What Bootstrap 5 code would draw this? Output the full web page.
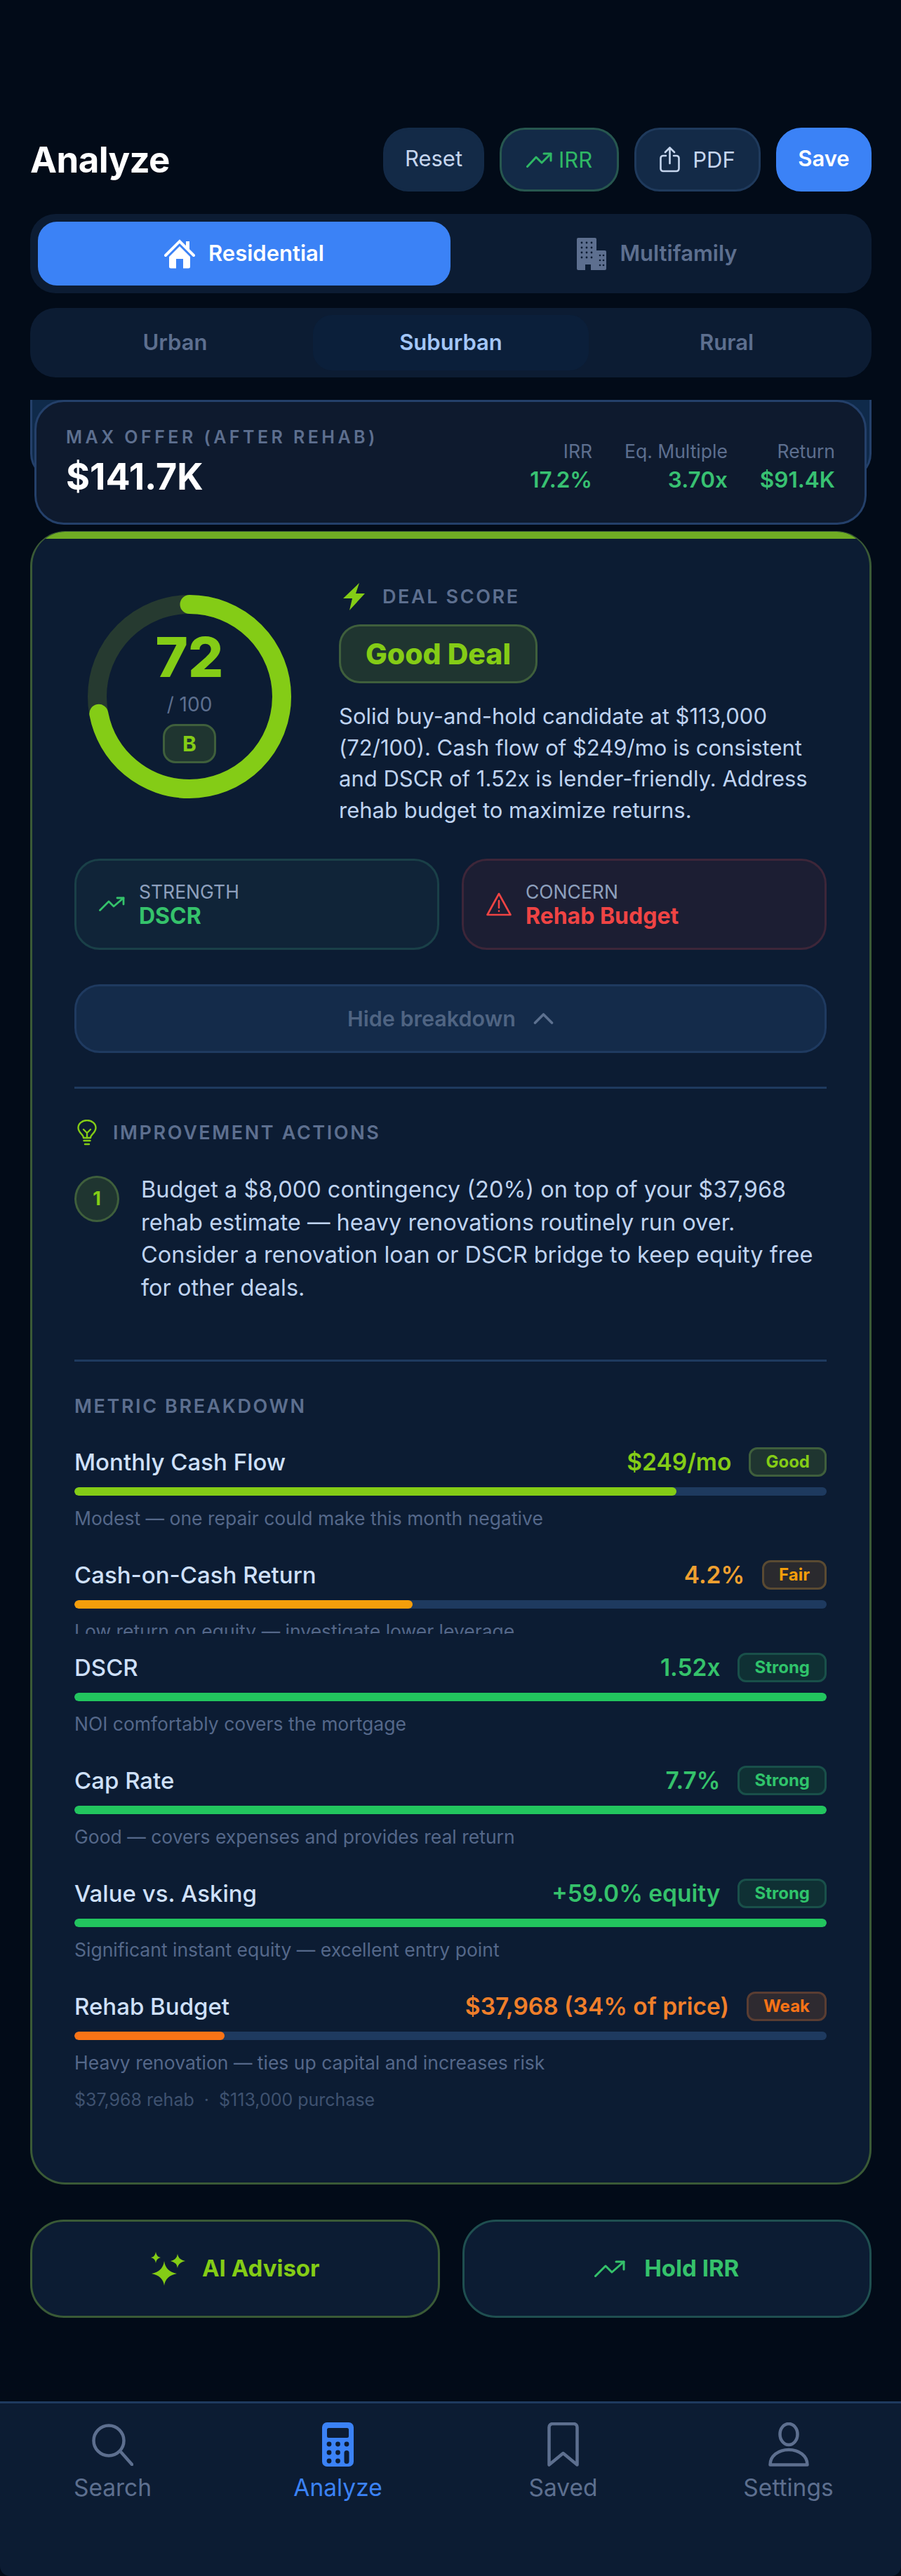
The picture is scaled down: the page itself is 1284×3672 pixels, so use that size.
<!DOCTYPE html>
<html lang="en">
<head>
<meta charset="utf-8">
<title>Analyze</title>
<link href="https://cdn.jsdelivr.net/npm/bootstrap@5.3.0/dist/css/bootstrap.min.css" rel="stylesheet">
<style>
html,body{background:#020b18;}
body{font-family:Inter,"Noto Sans",sans-serif;color:#cfe0fa;margin:0;}
.screen{height:3672px;width:1284px;overflow:hidden;}
.top-head{margin:182px 42px 0 43px;height:91px;}
.page-title{font-size:51px;font-weight:700;color:#fff;margin:0;line-height:1;letter-spacing:-.6px;}
.head-btns{gap:22px;}
.hb{height:91px;border-radius:36px;font-size:31px;font-weight:400;line-height:1;background:#132a47;border:3px solid #132a47;color:#c6d6ee;display:flex;align-items:center;justify-content:center;gap:9px;padding:0;}
.hb-reset,.hb-save{padding-bottom:4px;}
.hb-reset{width:144px;}
.hb-irr{width:170px;border-color:#27574f;color:#2fb865;}
.hb-pdf{width:180px;border-color:#1f3a5c;gap:18px;}
.hb-save{width:136px;background:#3b82f6;border-color:#3b82f6;color:#fff;font-weight:600;}
.seg{background:#0c1c33;border-radius:36px;margin:0 42px 0 43px;}
.seg-a{margin-top:32px;padding:11px;height:113px;}
.seg-b{margin-top:21px;padding:10px;height:99px;}
.seg-item{flex:1 1 0;display:flex;align-items:center;justify-content:center;color:#5d6f8f;font-size:31px;font-weight:600;gap:19px;border-radius:27px;}
.seg-a .seg-item:first-child{flex:0 0 588px;}
.seg-item.on-blue{background:#3b82f6;color:#fff;}
.seg-item.on-dark{background:#0b1f3a;color:#a3c6f7;}
.offer-wrap{margin:32px 42px 0 43px;}
.offer-back{position:absolute;left:0;right:0;top:0;height:113px;background:#0f2a4a;border:3px solid #24406a;border-top:0;border-radius:0 0 36px 36px;}
.offer-card{margin:0 7px 0 6px;height:178px;background:#0e1a2e;border:3px solid #24406a;border-radius:42px;padding:0 42px 0 42px;flex-direction:row;align-items:center;justify-content:space-between;color:#fff;}
.offer-label{font-size:25px;font-weight:600;letter-spacing:4.45px;color:#5d6f8f;line-height:30px;margin-bottom:12px;}
.offer-value{font-size:52px;font-weight:700;line-height:60px;color:#fff;}
.offer-stats{gap:46px;text-align:right;padding-top:12px;}
.stat-l{font-size:26.5px;color:#5d6f8f;line-height:32px;margin-bottom:6px;}
.stat-v{font-size:31.5px;font-weight:600;color:#38c172;line-height:38px;}
.deal-card{margin:9px 42px 0 43px;height:2357px;background:#0c1c33;border:3px solid #3a5a36;border-top-width:1px;border-radius:50px;overflow:hidden;}
.deal-stripe{height:10px;background:#6fac24;}
.deal-body{padding:63px 61px 0 60px;}
.ring-box{width:290px;height:290px;margin:17px 68px 0 19px;flex:none;}
.ring-inner{position:absolute;inset:0;display:flex;flex-direction:column;align-items:center;}
.ring-num{font-size:79px;font-weight:800;line-height:78px;color:#84cc16;margin-top:49px;}
.ring-of{font-size:28px;color:#5d6f8f;line-height:34px;margin-top:12px;}
.ring-grade{width:76px;height:56px;margin-top:11px;border-radius:18px;background:#1f3530;border:3px solid #3f5f3c;color:#84cc16;font-size:30px;font-weight:700;display:flex;align-items:center;justify-content:center;}
.deal-right{flex:1;min-width:0;}
.eyebrow{font-size:27px;font-weight:600;letter-spacing:2.6px;color:#5d6f8f;line-height:33px;}
.deal-eye{height:39px;gap:25px;padding-left:6px;}
.verdict{display:inline-block;margin-top:20px;height:84px;width:283px;line-height:78px;text-align:center;border-radius:30px;background:#1f3530;border:3px solid #3f5f3c;color:#84cc16;font-size:41px;font-weight:800;padding:0;}
.summary{margin:25px 0 0 0;font-size:31px;line-height:44.7px;color:#bfd3f0;}
.sc-row{margin-top:46px;gap:32px;}
.sc{flex:1 1 0;height:130px;border-radius:36px;border:3px solid;display:flex;flex-direction:row;align-items:center;padding:0 0 0 32px;gap:20px;}
.sc-good{background:#102438;border-color:#1a4048;}
.sc-bad{background:#1c1e33;border-color:#3d2639;}
.sc-l{font-size:26.5px;line-height:32px;color:#8ea0bd;margin-top:2px;}
.sc-v{font-size:32px;font-weight:700;line-height:38px;}
.toggle-btn{display:flex;align-items:center;justify-content:center;gap:25px;width:100%;height:98px;margin-top:49px;border-radius:36px;background:#142b4a;border:3px solid #1f3a60;color:#4f6482;font-size:30.5px;font-weight:600;padding:0;}
.rule{height:3px;background:#1e3a5f;opacity:1;border:0;margin:0;}
.rule-a{margin-top:48px;}
.imp-head{margin-top:44px;gap:23px;height:37px;padding-left:4px;}
.act{margin-top:40px;gap:31px;}
.act-num{flex:none;width:64px;height:66px;margin-top:3px;border-radius:50%;background:#1f3530;border:3px solid #3f5f3c;color:#84cc16;font-size:27px;font-weight:700;display:flex;align-items:center;justify-content:center;}
.act-text{margin:0;font-size:32.5px;line-height:46.8px;color:#bfd3f0;}
.rule-b{margin-top:78px;}
.mb-head{margin-top:47px;}
.metric{margin-top:42px;}
.m-top{height:42px;gap:25px;}
.m-name{font-size:33px;font-weight:500;color:#cfe0fa;margin-right:auto;line-height:42px;}
.m-val{font-size:33.5px;font-weight:600;line-height:42px;}
.m-pill{height:42px;border-radius:12px;border:3px solid;font-size:24px;font-weight:700;padding:0 21px;display:inline-flex;align-items:center;line-height:1;}
.p-good{background:#1f3530;border-color:#3f5f3c;color:#84cc16;}
.p-fair{background:#2a2a2e;border-color:#5a4a32;color:#f59e0b;}
.p-strong{background:#0f3034;border-color:#19504a;color:#2fc36b;}
.p-weak{background:#2e2a30;border-color:#5a3d32;color:#f97316;}
.c-good{color:#84cc16;}.c-fair{color:#f0a030;}.c-strong{color:#35c26b;}.c-weak{color:#f07f2a;}
.m-track{height:12px;margin-top:15px;border-radius:6px;background:#1e3a5f;}
.b-good{background:#84cc16;}.b-fair{background:#f59e0b;}.b-strong{background:#22c55e;}.b-weak{background:#f97316;}
.m-bar{border-radius:6px;}
.m-hint{font-size:26.5px;line-height:36px;color:#55688a;margin-top:14px;}
.m-clip{height:22px;overflow:hidden;}
.metric-tight{margin-bottom:-15px;}
.m-sub{font-size:25px;line-height:34px;color:#3f5270;margin-top:18px;}
.cta-row{margin:50px 42px 0 43px;gap:32px;}
.cta{flex:1 1 0;height:140px;border-radius:48px;background:#0c1c33;border:3px solid;font-size:33px;font-weight:700;display:flex;align-items:center;justify-content:center;gap:23px;padding:0;}
.cta-ai{border-color:#3a5a36;color:#84cc16;}
.cta-irr{border-color:#1f4f50;color:#35c26b;gap:27px;}
.tabbar{margin-top:auto;height:249px;background:#0c1c33;border-top:3px solid #1e3a5f;border-radius:0 0 14px 14px;padding-top:26px;flex-wrap:nowrap;}
.tab{flex:1 1 0;display:flex;flex-direction:column;align-items:center;color:#5d6f8f;font-size:33.5px;line-height:40px;padding:0;text-decoration:none;}
.tab-ic{height:64px;display:flex;align-items:center;justify-content:center;margin-bottom:10px;}
.tab.on{color:#3b82f6;}
svg{display:block;}
</style>
</head>
<body>
<div class="screen d-flex flex-column">

<header class="top-head d-flex justify-content-between align-items-center">
  <h1 class="page-title">Analyze</h1>
  <div class="head-btns d-flex">
    <button class="btn hb hb-reset" type="button">Reset</button>
    <button class="btn hb hb-irr" type="button"><svg width="37" height="22" viewBox="0 0 37 22" fill="none" stroke="#2fb865" stroke-width="3" stroke-linecap="round" stroke-linejoin="round"><path d="M1.5 20.5 14 7l8 8L35 2"/><path d="M25 2h10v10"/></svg>IRR</button>
    <button class="btn hb hb-pdf" type="button"><svg width="29" height="37" viewBox="0 0 29 37" fill="none" stroke="#c6d6ee" stroke-width="2.6" stroke-linecap="round" stroke-linejoin="round"><path d="M9 13H5a3.500 3.500 0 0 0-3.500 3.500v15A3.500 3.500 0 0 0 5 35h19a3.500 3.500 0 0 0 3.500-3.500v-15A3.500 3.500 0 0 0 24 13h-4"/><path d="M14.500 24V2M8 8l6.500-6.500L21 8"/></svg>PDF</button>
    <button class="btn hb hb-save" type="button">Save</button>
  </div>
</header>

<div class="seg seg-a d-flex">
  <div class="seg-item on-blue">
    <svg width="44" height="42" viewBox="0 0 44 42" fill="#fff"><path d="M31 3h5v12l-5-5z"/><path d="M2 23 22 3l20 20" fill="none" stroke="#fff" stroke-width="4" stroke-linecap="round"/><path d="M7 25 22 10l15 15v14a2.500 2.500 0 0 1-2.500 2.500H27V28H17v13.500H9.500A2.500 2.500 0 0 1 7 39z"/></svg>
    <span>Residential</span>
  </div>
  <div class="seg-item">
    <svg width="42" height="46" viewBox="0 0 42 46"><path fill="#5d6f8f" d="M2 0h24a2 2 0 0 1 2 2v44h-8v-8h-8v8H2a2 2 0 0 1-2-2V2a2 2 0 0 1 2-2z"/><path fill="#5d6f8f" d="M28 18h12a2 2 0 0 1 2 2v24a2 2 0 0 1-2 2H28z"/><g fill="#0c1c33"><circle cx="7" cy="7" r="1.400"/><circle cx="14" cy="7" r="1.400"/><circle cx="21" cy="7" r="1.400"/><circle cx="7" cy="14" r="1.400"/><circle cx="14" cy="14" r="1.400"/><circle cx="21" cy="14" r="1.400"/><circle cx="7" cy="21" r="1.400"/><circle cx="14" cy="21" r="1.400"/><circle cx="21" cy="21" r="1.400"/><circle cx="7" cy="28" r="1.400"/><circle cx="14" cy="28" r="1.400"/><circle cx="21" cy="28" r="1.400"/><circle cx="33" cy="25" r="1.300"/><circle cx="38" cy="25" r="1.300"/><circle cx="33" cy="32" r="1.300"/><circle cx="38" cy="32" r="1.300"/><circle cx="33" cy="39" r="1.300"/><circle cx="38" cy="39" r="1.300"/></g></svg>
    <span>Multifamily</span>
  </div>
</div>

<div class="seg seg-b d-flex">
  <div class="seg-item">Urban</div>
  <div class="seg-item on-dark">Suburban</div>
  <div class="seg-item">Rural</div>
</div>

<div class="offer-wrap position-relative">
  <div class="offer-back"></div>
  <div class="card offer-card position-relative">
    <div>
      <div class="offer-label">MAX OFFER (AFTER REHAB)</div>
      <div class="offer-value">$141.7K</div>
    </div>
    <div class="offer-stats d-flex">
      <div><div class="stat-l">IRR</div><div class="stat-v">17.2%</div></div>
      <div><div class="stat-l">Eq. Multiple</div><div class="stat-v">3.70x</div></div>
      <div><div class="stat-l">Return</div><div class="stat-v">$91.4K</div></div>
    </div>
  </div>
</div>

<section class="deal-card">
  <div class="deal-stripe"></div>
  <div class="deal-body">
    <div class="d-flex">
      <div class="ring-box position-relative">
        <svg width="290" height="290" viewBox="0 0 290 290" fill="none" stroke-width="27"><circle cx="145" cy="145" r="131.500" stroke="#263a30"/><circle cx="145" cy="145" r="131.500" stroke="#84cc16" stroke-linecap="round" stroke-dasharray="595 826.200" transform="rotate(-90 145 145)"/></svg>
        <div class="ring-inner">
          <div class="ring-num">72</div>
          <div class="ring-of">/ 100</div>
          <div class="ring-grade">B</div>
        </div>
      </div>
      <div class="deal-right">
        <div class="deal-eye d-flex align-items-center">
          <svg width="31" height="39" viewBox="0 0 31 39" fill="#84cc16"><path d="M23 0 0 22h13l-4 17 22-24H18z"/></svg>
          <span class="eyebrow">DEAL SCORE</span>
        </div>
        <div class="badge verdict">Good Deal</div>
        <p class="summary">Solid buy-and-hold candidate at $113,000 (72/100). Cash flow of $249/mo is consistent and DSCR of 1.52x is lender-friendly. Address rehab budget to maximize returns.</p>
      </div>
    </div>

    <div class="sc-row d-flex">
      <div class="card sc sc-good">
        <svg width="37" height="21" viewBox="0 0 37 21" fill="none" stroke="#35c26b" stroke-width="2.800" stroke-linecap="round" stroke-linejoin="round"><path d="M1.500 19.500 14 7l7 7L35 2"/><path d="M26 2h9v9"/></svg>
        <div><div class="sc-l">STRENGTH</div><div class="sc-v c-strong">DSCR</div></div>
      </div>
      <div class="card sc sc-bad">
        <svg width="36" height="34" viewBox="0 0 36 34" fill="none" stroke="#ef4444" stroke-width="2.600" stroke-linejoin="round" stroke-linecap="round"><path d="M18 2 34.500 32h-33z"/><path d="M18 12v10M18 26.500v.3"/></svg>
        <div><div class="sc-l">CONCERN</div><div class="sc-v" style="color:#ef4444">Rehab Budget</div></div>
      </div>
    </div>

    <button class="btn toggle-btn" type="button">Hide breakdown<svg width="29" height="16" viewBox="0 0 29 16" fill="none" stroke="#5d7190" stroke-width="3.600" stroke-linecap="round" stroke-linejoin="round"><path d="M2.500 14 14.500 2l12 12"/></svg></button>

    <hr class="rule rule-a">

    <div class="imp-head d-flex align-items-center">
      <svg width="28" height="37" viewBox="0 0 28 37" fill="none" stroke="#84cc16" stroke-width="2.400" stroke-linecap="round" stroke-linejoin="round"><path d="M9 26c0-5-7.500-7-7.500-14.500a12.500 10.500 0 0 1 25 0C26.500 19 19 21 19 26z"/><path d="M9 14l5 5 5-5M14 19v7M9.500 30h9M11 35h6"/></svg>
      <span class="eyebrow">IMPROVEMENT ACTIONS</span>
    </div>
    <div class="act d-flex">
      <div class="act-num">1</div>
      <p class="act-text">Budget a $8,000 contingency (20%) on top of your $37,968 rehab estimate — heavy renovations routinely run over. Consider a renovation loan or DSCR bridge to keep equity free for other deals.</p>
    </div>

    <hr class="rule rule-b">

    <div class="eyebrow mb-head">METRIC BREAKDOWN</div>

    <div class="metric">
      <div class="m-top d-flex align-items-center"><span class="m-name">Monthly Cash Flow</span><span class="m-val c-good">$249/mo</span><span class="badge m-pill p-good">Good</span></div>
      <div class="progress m-track"><div class="progress-bar m-bar b-good" style="width:80%"></div></div>
      <div class="m-hint">Modest — one repair could make this month negative</div>
    </div>
    <div class="metric metric-tight">
      <div class="m-top d-flex align-items-center"><span class="m-name">Cash-on-Cash Return</span><span class="m-val c-fair">4.2%</span><span class="badge m-pill p-fair">Fair</span></div>
      <div class="progress m-track"><div class="progress-bar m-bar b-fair" style="width:45%"></div></div>
      <div class="m-hint m-clip">Low return on equity — investigate lower leverage</div>
    </div>
    <div class="metric">
      <div class="m-top d-flex align-items-center"><span class="m-name">DSCR</span><span class="m-val c-strong">1.52x</span><span class="badge m-pill p-strong">Strong</span></div>
      <div class="progress m-track"><div class="progress-bar m-bar b-strong" style="width:100%"></div></div>
      <div class="m-hint">NOI comfortably covers the mortgage</div>
    </div>
    <div class="metric">
      <div class="m-top d-flex align-items-center"><span class="m-name">Cap Rate</span><span class="m-val c-strong">7.7%</span><span class="badge m-pill p-strong">Strong</span></div>
      <div class="progress m-track"><div class="progress-bar m-bar b-strong" style="width:100%"></div></div>
      <div class="m-hint">Good — covers expenses and provides real return</div>
    </div>
    <div class="metric">
      <div class="m-top d-flex align-items-center"><span class="m-name">Value vs. Asking</span><span class="m-val c-strong">+59.0% equity</span><span class="badge m-pill p-strong">Strong</span></div>
      <div class="progress m-track"><div class="progress-bar m-bar b-strong" style="width:100%"></div></div>
      <div class="m-hint">Significant instant equity — excellent entry point</div>
    </div>
    <div class="metric">
      <div class="m-top d-flex align-items-center"><span class="m-name">Rehab Budget</span><span class="m-val c-weak">$37,968 (34% of price)</span><span class="badge m-pill p-weak">Weak</span></div>
      <div class="progress m-track"><div class="progress-bar m-bar b-weak" style="width:20%"></div></div>
      <div class="m-hint">Heavy renovation — ties up capital and increases risk</div>
      <div class="m-sub">$37,968 rehab &nbsp;·&nbsp; $113,000 purchase</div>
    </div>
  </div>
</section>

<div class="cta-row d-flex">
  <button class="btn cta cta-ai" type="button"><svg width="51" height="48" viewBox="0 0 51 48" fill="#84cc16"><path d="M20 13Q22 28 38 31 22 34 20 48 18 34 2 31 18 28 20 13z"/><path d="M8 0Q9 7 15 8 9 9 8 16 7 9 1 8 7 7 8 0z"/><path d="M39 3Q40 11 50 13 40 15 39 23 38 15 29 13 38 11 39 3z"/></svg>AI Advisor</button>
  <button class="btn cta cta-irr" type="button"><svg width="44" height="24" viewBox="0 0 44 24" fill="none" stroke="#35c26b" stroke-width="3" stroke-linecap="round" stroke-linejoin="round"><path d="M1.500 22.500 16 8l9 9L42 2"/><path d="M31 2h11v11"/></svg>Hold IRR</button>
</div>

<nav class="nav tabbar">
  <a class="tab" href="#"><span class="tab-ic"><svg width="59" height="62" viewBox="0 0 59 62" fill="none" stroke="#5d6f8f" stroke-width="4.500" stroke-linecap="round"><circle cx="24" cy="26" r="21.500"/><path d="M42 43l15 17"/></svg></span>Search</a>
  <a class="tab on" href="#"><span class="tab-ic"><svg width="45" height="63" viewBox="0 0 45 63"><rect width="45" height="63" rx="7" fill="#3b82f6"/><rect x="7" y="8" width="31" height="14" rx="2.500" fill="#0c1c33"/><g fill="#0c1c33"><circle cx="10" cy="31" r="3.400"/><circle cx="22.500" cy="31" r="3.400"/><circle cx="35" cy="31" r="3.400"/><circle cx="10" cy="43" r="3.400"/><circle cx="22.500" cy="43" r="3.400"/><circle cx="10" cy="55" r="3.400"/><circle cx="22.500" cy="55" r="3.400"/><rect x="31.500" y="40" width="7" height="19" rx="3.500"/></g></svg></span>Analyze</a>
  <a class="tab" href="#"><span class="tab-ic"><svg width="45" height="63" viewBox="0 0 45 63" fill="none" stroke="#5d6f8f" stroke-width="4.500" stroke-linejoin="round"><path d="M2.500 60.500V7a5 5 0 0 1 5-5h30a5 5 0 0 1 5 5v53.500L22.500 44z"/></svg></span>Saved</a>
  <a class="tab" href="#"><span class="tab-ic"><svg width="58" height="63" viewBox="0 0 58 63" fill="none" stroke="#5d6f8f" stroke-width="4.500" stroke-linejoin="round"><ellipse cx="29" cy="17" rx="12.500" ry="15"/><path d="M2.500 60.500C2.500 48 14 39 29 39s26.500 9 26.500 21.500z"/></svg></span>Settings</a>
</nav>

</div>
<script src="https://cdn.jsdelivr.net/npm/bootstrap@5.3.0/dist/js/bootstrap.bundle.min.js"></script>
</body>
</html>
